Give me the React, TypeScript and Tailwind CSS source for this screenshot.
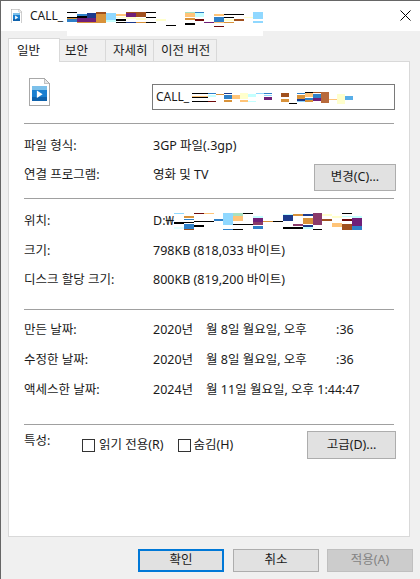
import { ReactNode } from 'react';

type Bar = [number, number, number, number, string];

const BLUE = '#2f80c8';
const NAVY = '#1c3a8c';
const PURPLE = '#6f1f78';
const MAUVE = '#8a3a6a';
const ORANGE = '#d8923a';
const PEACH = '#ffc478';
const CREAM = '#ffffcc';
const PALE = '#c4ffff';
const SKY = '#90d8ff';
const BROWN = '#a0501e';
const MAROON = '#6e0a0a';
const INK = '#000000';

// coordinates are in the 3x zoom, so viewBox = 3 * size
const titleBars: Bar[] = [
  [0, 0, 30, 3, INK], [0, 14, 30, 3, INK], [0, 19, 30, 2, ORANGE], [0, 20, 30, 10, BLUE],
  [30, 6, 30, 6, BLUE], [30, 12, 30, 6, INK], [30, 19, 30, 10, PURPLE], [30, 29, 30, 3, ORANGE],
  [60, 4, 28, 15, NAVY], [60, 19, 28, 10, PURPLE], [60, 29, 28, 4, ORANGE],
  [88, 0, 30, 6, BROWN], [88, 6, 30, 28, ORANGE],
  [118, 4, 30, 20, SKY], [118, 24, 30, 5, PALE],
  [148, 6, 30, 6, PEACH], [148, 14, 30, 4, CREAM], [148, 20, 30, 6, INK], [148, 30, 30, 2, INK],
  [178, 0, 30, 3, BROWN], [178, 4, 30, 10, PURPLE], [178, 16, 30, 6, CREAM], [178, 29, 30, 3, NAVY],
  [208, 0, 28, 14, BROWN], [208, 18, 28, 6, CREAM], [208, 29, 28, 5, ORANGE],
  [236, 0, 30, 3, INK], [236, 14, 30, 3, INK], [236, 29, 30, 3, INK],
  [266, 22, 30, 5, CREAM], [296, 39, 30, 3, INK],
  [355, 0, 30, 4, '#a8e0c0'], [355, 4, 30, 12, PEACH], [355, 19, 30, 4, ORANGE], [355, 34, 30, 5, INK],
  [385, 0, 27, 3, BLUE], [385, 4, 27, 10, PALE], [385, 22, 27, 5, MAROON],
  [412, 31, 30, 3, PURPLE],
  [442, 6, 30, 6, PEACH], [442, 16, 30, 14, BLUE], [442, 30, 30, 4, PEACH], [442, 42, 30, 3, MAROON],
  [472, 6, 30, 4, INK], [472, 14, 30, 4, INK], [472, 20, 30, 8, CREAM], [472, 30, 30, 4, ORANGE],
  [502, 6, 30, 4, INK], [502, 22, 30, 6, BROWN],
  [532, 16, 26, 3, CREAM],
  [558, 0, 30, 21, SKY], [558, 27, 30, 6, SKY],
];

const nameBars: Bar[] = [
  [0, 2, 48, 3, INK], [0, 12, 48, 3, PEACH], [0, 16, 48, 3, INK], [0, 26, 48, 3, INK],
  [48, 2, 24, 4, BLUE], [48, 10, 24, 4, PALE], [48, 26, 24, 3, MAROON],
  [72, 6, 24, 2, ORANGE],
  [96, 4, 24, 3, NAVY], [96, 8, 24, 14, BLUE], [96, 24, 24, 6, ORANGE],
  [120, 10, 24, 12, PEACH],
  [144, 4, 24, 18, CREAM], [144, 24, 24, 6, PEACH],
  [168, 6, 24, 8, PALE], [168, 26, 24, 4, PALE],
  [192, 2, 24, 4, SKY],
  [216, 2, 25, 4, BLUE], [216, 8, 25, 4, SKY], [216, 16, 25, 8, PURPLE],
  [266, 2, 25, 14, BROWN], [266, 20, 25, 3, INK], [266, 22, 25, 8, ORANGE],
  [291, 34, 24, 3, INK],
  [315, 4, 24, 3, BLUE], [315, 8, 24, 14, ORANGE], [315, 22, 24, 4, NAVY], [315, 26, 24, 4, SKY],
  [339, 0, 24, 3, INK], [339, 2, 24, 14, PEACH], [339, 18, 24, 6, BLUE], [339, 24, 24, 6, ORANGE],
  [363, 0, 24, 4, BROWN], [363, 6, 24, 12, BLUE], [363, 18, 24, 8, PURPLE],
  [387, 0, 24, 32, '#b86a3c'],
  [411, 22, 24, 3, PEACH],
  [435, 6, 24, 30, CREAM],
  [459, 12, 24, 12, '#58aee8'],
];

const pathBars: Bar[] = [
  [0, 0, 30, 3, SKY], [0, 28, 30, 5, INK], [0, 42, 30, 6, '#e0ffff'],
  [30, 8, 30, 8, ORANGE], [30, 18, 30, 3, BLUE], [30, 28, 30, 3, INK], [30, 34, 30, 14, BLUE], [30, 48, 30, 3, BROWN],
  [60, 0, 30, 3, MAROON], [60, 24, 30, 3, INK], [60, 36, 30, 6, INK],
  [90, 0, 30, 3, PEACH], [90, 24, 30, 3, INK],
  [120, 18, 27, 6, BLUE],
  [147, 0, 30, 36, SKY], [147, 48, 30, 3, BLUE],
  [177, 0, 30, 10, '#a8e0c0'], [177, 10, 30, 14, PEACH], [177, 33, 30, 3, INK], [177, 48, 30, 3, INK],
  [207, 0, 30, 3, INK], [207, 33, 30, 3, INK],
  [237, 10, 30, 6, PALE], [237, 16, 30, 12, PURPLE], [237, 28, 30, 8, MAUVE], [237, 38, 30, 10, BLUE],
  [267, 24, 30, 3, ORANGE],
  [297, 24, 30, 3, INK],
  [327, 2, 30, 4, PALE], [327, 6, 30, 18, NAVY], [327, 42, 30, 6, INK],
  [357, 3, 30, 7, ORANGE], [357, 33, 30, 7, MAUVE], [357, 42, 30, 6, INK],
  [387, 3, 30, 7, NAVY], [387, 16, 30, 18, ORANGE], [387, 36, 30, 6, NAVY], [387, 42, 30, 6, PALE],
  [417, 0, 27, 36, MAUVE], [417, 48, 27, 3, INK],
  [444, 3, 30, 5, CREAM], [444, 18, 30, 6, BROWN],
  [474, 10, 30, 6, CREAM], [474, 30, 30, 12, PEACH],
  [504, 0, 30, 3, INK], [504, 8, 30, 3, PALE], [504, 18, 30, 6, MAROON], [504, 33, 30, 17, BROWN],
  [534, 10, 30, 6, PALE], [534, 16, 30, 22, PURPLE], [534, 38, 30, 12, BLUE],
];

function Scribble({ bars, w, h, className }: { bars: Bar[]; w: number; h: number; className?: string }) {
  return (
    <svg width={w} height={h} viewBox={`0 0 ${w * 3} ${h * 3}`} shapeRendering="crispEdges" className={className}>
      {bars.map(([x, y, bw, bh, fill], i) => (
        <rect key={i} x={x} y={y} width={bw} height={bh} fill={fill} />
      ))}
    </svg>
  );
}

function VideoFileIcon({ size }: { size: number }) {
  return (
    <svg width={size} height={size * 1.35} viewBox="0 0 20 27" shapeRendering="crispEdges">
      <path d="M0.5 0.5H14.5L19.5 5.5V26.5H0.5Z" fill="#ffffff" stroke="#a8a8a8" />
      <path d="M14.5 0.5V5.5H19.5" fill="#e8e8e8" stroke="#c0c0c0" />
      <rect x="3" y="8" width="14" height="14" fill="#1a7fd0" />
      <rect x="3" y="8" width="14" height="3" fill="#7cc0ea" />
      <rect x="3" y="18" width="14" height="4" fill="#0f62ac" />
      <path d="M7.5 12V19L13 15.5Z" fill="#ffffff" shapeRendering="auto" />
    </svg>
  );
}

function Row({ label, h, children }: { label: string; h: number; children: ReactNode }) {
  return (
    <div className="flex items-center" style={{ height: h }}>
      <div className="w-[129px] shrink-0">{label}</div>
      <div className="whitespace-pre">{children}</div>
    </div>
  );
}

function Sep({ className }: { className: string }) {
  return <div className={`h-px w-[370px] bg-[#a0a0a0] ${className}`} />;
}

function Tab({ label, w, pad, active }: { label: string; w: string; pad: string; active?: boolean }) {
  return active ? (
    <div className={`${w} ${pad} relative z-10 -mb-px -mt-[2px] h-[24px] border border-b-0 border-[#d9d9d9] bg-white pt-[3px]`}>{label}</div>
  ) : (
    <div className={`${w} ${pad} h-[22px] border border-b-0 border-l-0 border-[#d9d9d9] bg-[#f0f0f0] pt-[2px]`}>{label}</div>
  );
}

export default function App() {
  return (
    <div
      className="flex h-[579px] w-[420px] flex-col overflow-hidden border-l border-t border-[#666666] bg-[#f0f0f0] text-[12.5px] text-[#1a1a1a]"
      style={{ fontFamily: '"Noto Sans", "Noto Sans CJK KR", sans-serif' }}
    >
      {/* title bar */}
      <div className="relative flex h-[30px] shrink-0 items-center bg-white pl-[10px]">
        <VideoFileIcon size={11} />
        <span className="ml-[8px] text-[12px]">CALL_</span>
        <div className="absolute left-[66px] top-[11px] h-[24px] w-[196px] bg-white">
          <Scribble bars={titleBars} w={196} h={24} />
        </div>
        <svg className="absolute left-[399px] top-[9px]" width="11" height="11" viewBox="0 0 11 11">
          <path d="M0.5 0.5L10.5 10.5M10.5 0.5L0.5 10.5" stroke="#000000" strokeWidth="1" fill="none" />
        </svg>
      </div>

      {/* tabs */}
      <div className="ml-[7px] mt-[10px] flex h-[20px] shrink-0 items-end">
        <Tab label="일반" w="w-[52px]" pad="pl-[8px]" active />
        <Tab label="보안" w="w-[46px]" pad="pl-[5px]" />
        <Tab label="자세히" w="w-[48px]" pad="pl-[7px]" />
        <Tab label="이전 버전" w="w-[63px]" pad="pl-[7px]" />
      </div>

      {/* panel */}
      <div className="ml-[7px] flex h-[476px] w-[402px] shrink-0 flex-col border border-[#d9d9d9] bg-white pl-[15px]">
        <div className="flex h-[61px] shrink-0">
          <div className="ml-[5px] mt-[16px] w-[123px]">
            <VideoFileIcon size={21} />
          </div>
          <div className="mt-[22px] flex h-[26px] w-[243px] items-center overflow-hidden border border-[#7a7a7a] pl-[3px]">
            <span className="text-[12px]">CALL_</span>
            <Scribble bars={nameBars} w={161} h={12} className="ml-[3px] mt-[1px] shrink-0" />
          </div>
        </div>
        <Sep className="" />

        <div className="mt-[8px]">
          <Row label="파일 형식:" h={28}>3GP 파일(.3gp)</Row>
          <div className="flex h-[34px] items-center">
            <div className="-mt-[4px] w-[129px] shrink-0">연결 프로그램:</div>
            <div className="-mt-[4px] flex-1">영화 및 TV</div>
            <button className="mr-[13px] h-[27px] w-[82px] border border-[#adadad] bg-[#e1e1e1] pt-[1px]">변경(C)...</button>
          </div>
        </div>
        <Sep className="mt-[4px]" />

        <div className="mt-[8px]">
          <Row label="위치:" h={29}>
            <span className="flex items-center">
              D:₩
              <Scribble bars={pathBars} w={188} h={17} className="-mt-[1px]" />
            </span>
          </Row>
          <Row label="크기:" h={30}>798KB (818,033 바이트)</Row>
          <Row label="디스크 할당 크기:" h={29}>800KB (819,200 바이트)</Row>
        </div>
        <Sep className="mt-[14px]" />

        <div className="mt-[5px]">
          <Row label="만든 날짜:" h={30}>{'2020년    월 8일 월요일, 오후         :36'}</Row>
          <Row label="수정한 날짜:" h={30}>{'2020년    월 8일 월요일, 오후         :36'}</Row>
          <Row label="액세스한 날짜:" h={30}>2024년    월 11일 월요일, 오후 1:44:47</Row>
        </div>
        <Sep className="mt-[19px]" />

        <div className="mt-[6px] flex items-start">
          <div className="mt-[1px] w-[58px] shrink-0">특성:</div>
          <label className="mt-[5px] flex items-center gap-[4px]">
            <span className="h-[13px] w-[13px] border border-[#333333] bg-white" />
            읽기 전용(R)
          </label>
          <label className="ml-[14px] mt-[5px] flex items-center gap-[3px]">
            <span className="h-[13px] w-[13px] border border-[#333333] bg-white" />
            숨김(H)
          </label>
          <button className="ml-auto mr-[13px] h-[28px] w-[89px] border border-[#adadad] bg-[#e1e1e1]">고급(D)...</button>
        </div>
      </div>

      {/* footer */}
      <div className="mt-[12px] flex shrink-0 pl-[137px]">
        <button className="h-[23px] w-[86px] border-2 border-[#0078d7] bg-[#e1e1e1]">확인</button>
        <button className="ml-[9px] h-[23px] w-[86px] border border-[#adadad] bg-[#e1e1e1]">취소</button>
        <button className="ml-[8px] h-[23px] w-[86px] border border-[#bfbfbf] bg-[#cccccc] text-[#838383]">적용(A)</button>
      </div>
    </div>
  );
}
